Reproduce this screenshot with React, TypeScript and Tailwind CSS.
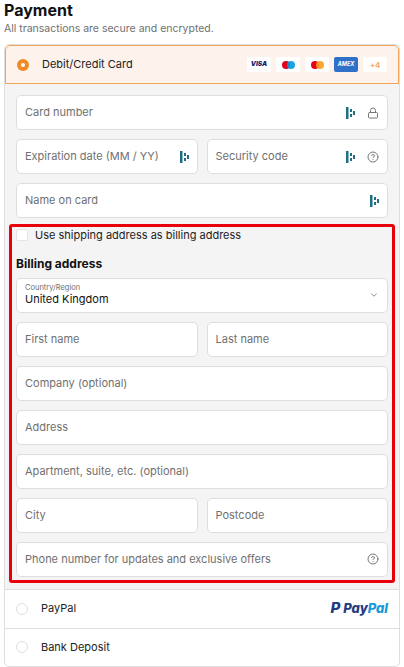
import React from 'react'
import { Lock, CircleHelp, ChevronDown } from 'lucide-react'

const Grip = () => (
  <svg width="9" height="12" viewBox="0 0 9 12" className="shrink-0">
    <rect x="0" y="0" width="2.5" height="12" fill="#1e6f84" />
    <rect x="4" y="2" width="2" height="3" fill="#1e6f84" />
    <rect x="4" y="7" width="2" height="3" fill="#1e6f84" />
    <rect x="7" y="4" width="2" height="4" fill="#1e6f84" />
  </svg>
)

const Field = ({ label, icons, className = '' }: { label: string; icons?: React.ReactNode; className?: string }) => (
  <div className={`h-[35px] bg-white border border-[#dedede] rounded-[5px] flex items-center px-2 gap-3 ${className}`}>
    <span className="flex-1 text-[11px] text-[#707070] truncate">{label}</span>
    {icons}
  </div>
)

export default function App() {
  return (
    <div className="w-[404px] h-[667px] bg-white overflow-hidden" style={{ fontFamily: 'Inter, "Liberation Sans", sans-serif' }}>
      <div className="px-1">
        <h1 className="text-[16px] font-bold text-[#111] leading-none pt-[2px]">Payment</h1>
        <p className="text-[10.5px] text-[#707070] mt-[4px] leading-[14px]">All transactions are secure and encrypted.</p>
      </div>
      <div className="mx-1 mt-[8px] border border-[#dedede] rounded-[5px] overflow-hidden">
        <div className="h-[39px] bg-[#fdf2ec] border border-[#f2a45a] rounded-t-[5px] flex items-center px-[11px]">
          <span className="w-[12px] h-[12px] rounded-full bg-[#f08a24] flex items-center justify-center">
            <span className="w-[4px] h-[4px] rounded-full bg-white" />
          </span>
          <span className="ml-[13px] text-[11px] text-[#222] flex-1">Debit/Credit Card</span>
          <div className="flex gap-[5px]">
            <span className="w-[24px] h-[15px] bg-white rounded-[2px] flex items-center justify-center text-[6.5px] font-black italic text-[#1a1f71]">VISA</span>
            <span className="w-[24px] h-[15px] bg-white rounded-[2px] flex items-center justify-center">
              <span className="w-[8px] h-[8px] rounded-full bg-[#e3001b]" />
              <span className="w-[8px] h-[8px] rounded-full bg-[#0099df] -ml-[3px] opacity-90" />
            </span>
            <span className="w-[24px] h-[15px] bg-white rounded-[2px] flex items-center justify-center">
              <span className="w-[8px] h-[8px] rounded-full bg-[#eb001b]" />
              <span className="w-[8px] h-[8px] rounded-full bg-[#f79e1b] -ml-[3px] opacity-90" />
            </span>
            <span className="w-[24px] h-[15px] bg-[#2f71c8] rounded-[2px] flex items-center justify-center text-[5.5px] font-bold italic text-white">AMEX</span>
            <span className="w-[24px] h-[15px] bg-white rounded-[2px] flex items-center justify-center text-[8px] font-semibold text-[#f2a45a]">+4</span>
          </div>
        </div>
        <div className="bg-[#f4f4f4] px-[11px] pt-[11px] pb-[6px] flex flex-col gap-[9px]">
          <Field label="Card number" icons={<><Grip /><Lock size={12} className="text-[#777]" /></>} />
          <div className="flex gap-[9px]">
            <Field className="flex-1" label="Expiration date (MM / YY)" icons={<Grip />} />
            <Field className="flex-1" label="Security code" icons={<><Grip /><CircleHelp size={12} className="text-[#777]" /></>} />
          </div>
          <Field label="Name on card" icons={<Grip />} />
          <div className="-mx-[7px] -mt-[3px] border-[3px] border-[#e8000b] rounded-[3px] px-[4px] pb-[3px] flex flex-col gap-[9px]">
            <label className="flex items-center gap-[7px]">
              <span className="w-[12px] h-[12px] bg-white rounded-[2px] border border-[#e4e4e4]" />
              <span className="text-[11px] text-[#222]">Use shipping address as billing address</span>
            </label>
            <h2 className="text-[12px] font-bold text-[#111] mt-[2px] -mb-[4px]">Billing address</h2>
            <div className="h-[35px] bg-white border border-[#dedede] rounded-[5px] flex items-center px-2">
              <div className="flex-1 flex flex-col leading-tight">
                <span className="text-[7.5px] text-[#707070]">Country/Region</span>
                <span className="text-[11px] text-[#111]">United Kingdom</span>
              </div>
              <ChevronDown size={10} className="text-[#777]" />
            </div>
            <div className="flex gap-[9px]">
              <Field className="flex-1" label="First name" />
              <Field className="flex-1" label="Last name" />
            </div>
            <Field label="Company (optional)" />
            <Field label="Address" />
            <Field label="Apartment, suite, etc. (optional)" />
            <div className="flex gap-[9px]">
              <Field className="flex-1" label="City" />
              <Field className="flex-1" label="Postcode" />
            </div>
            <Field label="Phone number for updates and exclusive offers" icons={<CircleHelp size={12} className="text-[#777]" />} />
          </div>
        </div>
        <div className="h-[39px] flex items-center px-[11px] border-t border-[#dedede]">
          <span className="w-[12px] h-[12px] rounded-full border border-[#dedede]" />
          <span className="ml-[13px] text-[11px] text-[#222] flex-1">PayPal</span>
          <span className="flex items-center gap-[3px] text-[13px] font-extrabold italic">
            <span className="text-[#253b80] text-[15px]">P</span>
            <span className="text-[#253b80]">Pay</span><span className="text-[#179bd7] -ml-[3px]">Pal</span>
          </span>
        </div>
        <div className="h-[38px] flex items-center px-[11px] border-t border-[#dedede]">
          <span className="w-[12px] h-[12px] rounded-full border border-[#dedede]" />
          <span className="ml-[13px] text-[11px] text-[#222]">Bank Deposit</span>
        </div>
      </div>
    </div>
  )
}
